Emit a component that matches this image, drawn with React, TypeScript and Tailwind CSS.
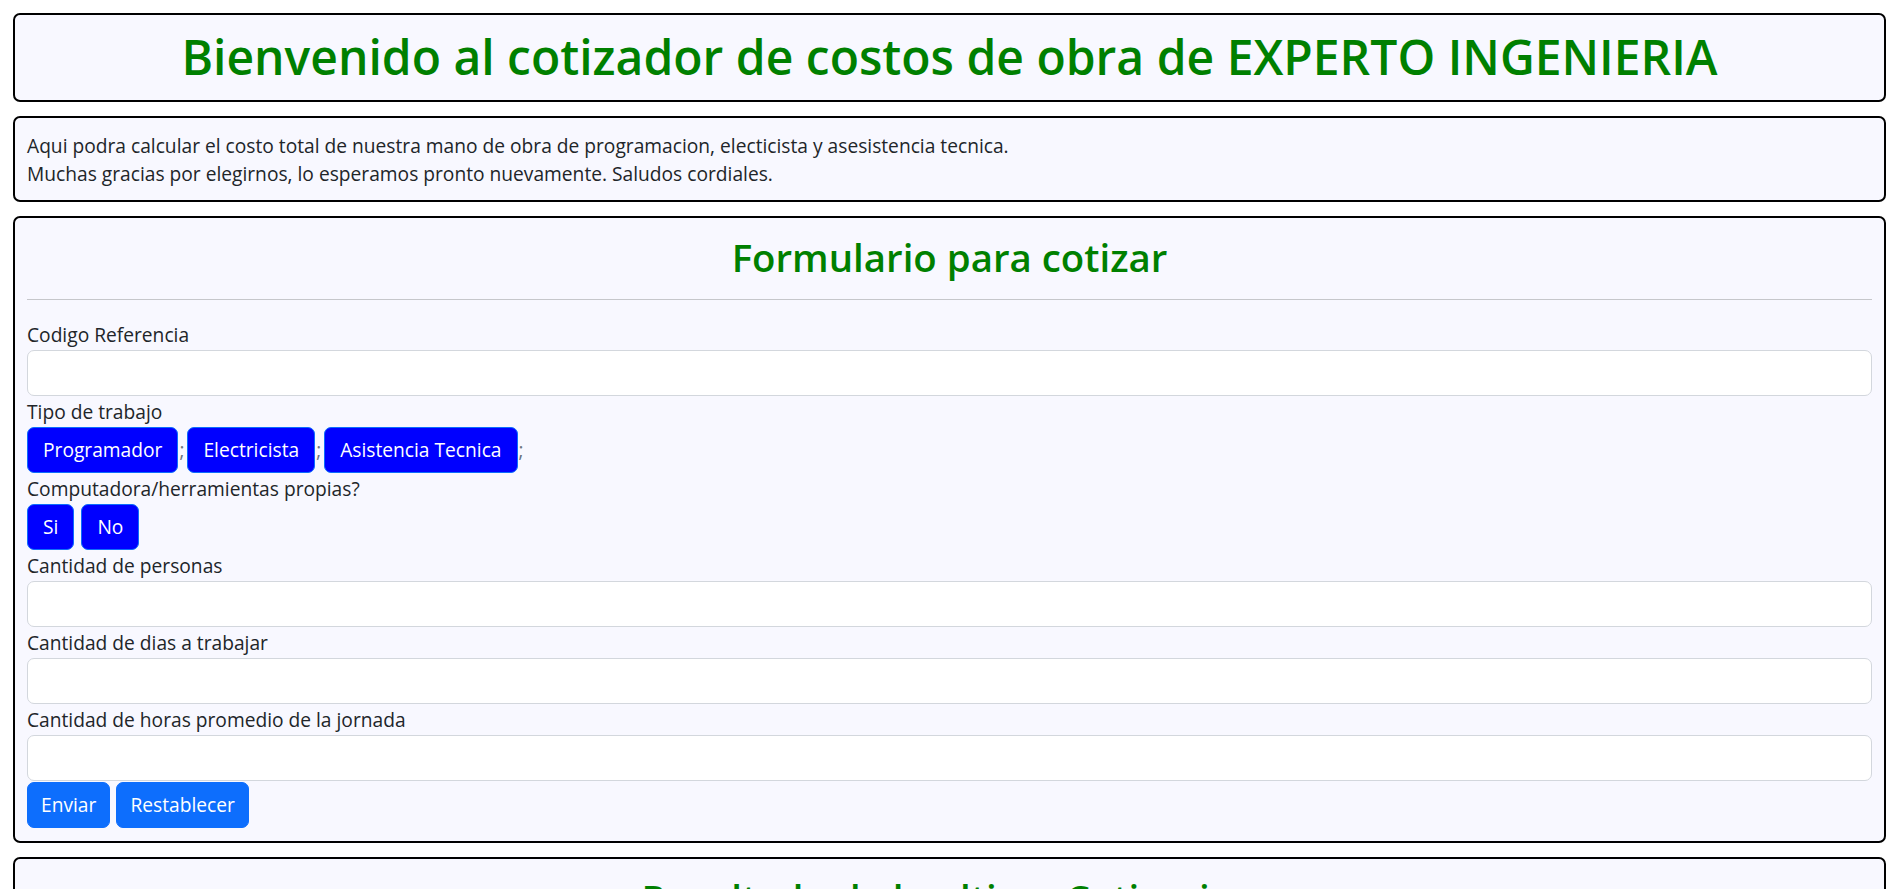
const tipos = ["Programador", "Electricista", "Asistencia Tecnica"];

function Card({ children, className = "" }: { children: React.ReactNode; className?: string }) {
  return <div className={`rounded-[7px] border-2 border-black bg-[#f8f8ff] px-3 ${className}`}>{children}</div>;
}

function Etiqueta({ children }: { children: React.ReactNode }) {
  return <label className="block h-[31px] leading-[31px]">{children}</label>;
}

function Campo({ label }: { label: string }) {
  return (
    <div>
      <Etiqueta>{label}</Etiqueta>
      <input
        type="text"
        className="block h-[46px] w-full rounded-[7px] border border-[#d3d7dd] bg-white px-[14px] outline-none"
      />
    </div>
  );
}

function Boton({ children, azul = false }: { children: React.ReactNode; azul?: boolean }) {
  return (
    <button
      type="button"
      className={`h-[46px] rounded-[7px] border text-white ${
        azul ? "border-[#0d6efd] bg-[#0000ff] px-[15px]" : "border-[#0d6efd] bg-[#0d6efd] px-[13px]"
      }`}
    >
      {children}
    </button>
  );
}

export default function App() {
  return (
    <div className="min-h-screen bg-white font-['Open_Sans',sans-serif] text-[19.2px] leading-[1.5] text-[#212529]">
      <div className="flex flex-col gap-[14px] px-[13px] pt-[13px] pb-6">
        <Card className="pt-[13px] pb-[14px] text-center">
          <h1 className="text-[48px] leading-[1.2] font-semibold text-[#008000]">
            Bienvenido al cotizador de costos de obra de EXPERTO INGENIERIA
          </h1>
        </Card>

        <Card className="pt-[14px] pb-[11px]">
          <p>Aqui podra calcular el costo total de nuestra mano de obra de programacion, electicista y asesistencia tecnica.</p>
          <p>Muchas gracias por elegirnos, lo esperamos pronto nuevamente. Saludos cordiales.</p>
        </Card>

        <Card className="pt-[16px] pb-[13px]">
          <h2 className="text-center text-[38.4px] leading-[1.2] font-semibold text-[#008000]">Formulario para cotizar</h2>
          <hr className="mt-[19px] mb-[19px] border-t border-[#c6c7cb]" />
          <form>
            <Campo label="Codigo Referencia" />
            <Etiqueta>Tipo de trabajo</Etiqueta>
            <div className="flex items-center">
              {tipos.map((t) => (
                <div key={t} className="flex items-center">
                  <Boton azul>{t}</Boton>
                  <span className="ml-[1px] mr-[3px] text-[#6c757d]">;</span>
                </div>
              ))}
            </div>
            <Etiqueta>Computadora/herramientas propias?</Etiqueta>
            <div className="flex gap-[7px]">
              <Boton azul>Si</Boton>
              <Boton azul>No</Boton>
            </div>
            <Campo label="Cantidad de personas" />
            <Campo label="Cantidad de dias a trabajar" />
            <Campo label="Cantidad de horas promedio de la jornada" />
            <div className="mt-[1px] flex gap-[6px]">
              <Boton>Enviar</Boton>
              <Boton>Restablecer</Boton>
            </div>
          </form>
        </Card>

        <Card className="pt-[16px] pb-[14px]">
          <h2 className="text-center text-[38.4px] leading-[1.2] font-semibold text-[#008000]">Resultado de la ultima Cotizacion</h2>
          <hr className="mt-[19px] mb-[19px] border-t border-[#c6c7cb]" />
          <p>Codigo Referencia: -</p>
          <p>Tipo de trabajo: -</p>
          <p>Costo total: $0</p>
        </Card>
      </div>
    </div>
  );
}
